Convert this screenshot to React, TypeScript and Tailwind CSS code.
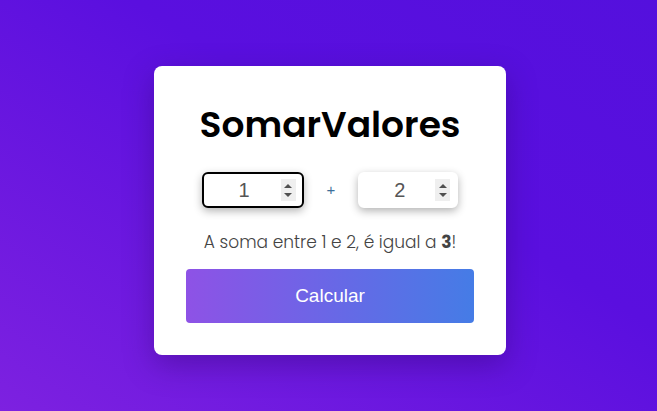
import { useState } from "react";

function Spinner() {
  return (
    <div className="flex h-[22px] w-[15px] flex-col items-center justify-center gap-[5px] bg-[#efefef]">
      <span className="h-0 w-0 border-x-[4px] border-b-[4px] border-x-transparent border-b-[#505050]" />
      <span className="h-0 w-0 border-x-[4px] border-t-[4px] border-x-transparent border-t-[#505050]" />
    </div>
  );
}

function NumberBox({ value, focused }: { value: number; focused?: boolean }) {
  return (
    <div
      className={`flex h-[36px] items-center rounded-[6px] border-2 bg-white pr-[6px] shadow-[0_3px_8px_rgba(0,0,0,0.3)] ${
        focused ? "w-[102px] border-black" : "w-[100px] border-white"
      }`}
    >
      <span className="flex-1 pl-[4px] text-center text-[20px] text-[#555] [font-family:'Liberation_Sans',Arial,sans-serif]">
        {value}
      </span>
      <Spinner />
    </div>
  );
}

export default function App() {
  const [a] = useState(1);
  const [b] = useState(2);

  return (
    <div className="flex h-[411px] w-full items-start justify-center bg-[linear-gradient(to_top_right,#7d21e0,#5a0fdf_60%,#5410dd)] pt-[66px] pl-[3px]">
      <div className="flex w-[352px] flex-col items-center rounded-[8px] bg-white px-8 pt-[32px] pb-[32px] shadow-[0_10px_30px_rgba(40,0,90,0.35)]">
        <h1 className="text-[36px] leading-[54px] font-semibold text-black [font-family:Poppins,'Open_Sans',sans-serif]">
          SomarValores
        </h1>
        <div className="mt-[20px] flex items-center gap-[23px]">
          <NumberBox value={a} focused />
          <span className="text-[15px] text-[#3d6f9a] [font-family:'Liberation_Sans',Arial,sans-serif]">+</span>
          <NumberBox value={b} />
        </div>
        <p className="mt-[22px] text-[17px] leading-[24px] font-light text-[#444] [font-family:Poppins,'Open_Sans',sans-serif]">
          A soma entre {a} e {b}, é igual a <b className="font-bold">{a + b}</b>!
        </p>
        <button className="mt-[15px] h-[54px] w-full rounded-[4px] bg-[linear-gradient(to_right,#8e52e6,#457ce6)] text-[19px] text-white [font-family:'Liberation_Sans',Arial,sans-serif]">
          Calcular
        </button>
      </div>
    </div>
  );
}
